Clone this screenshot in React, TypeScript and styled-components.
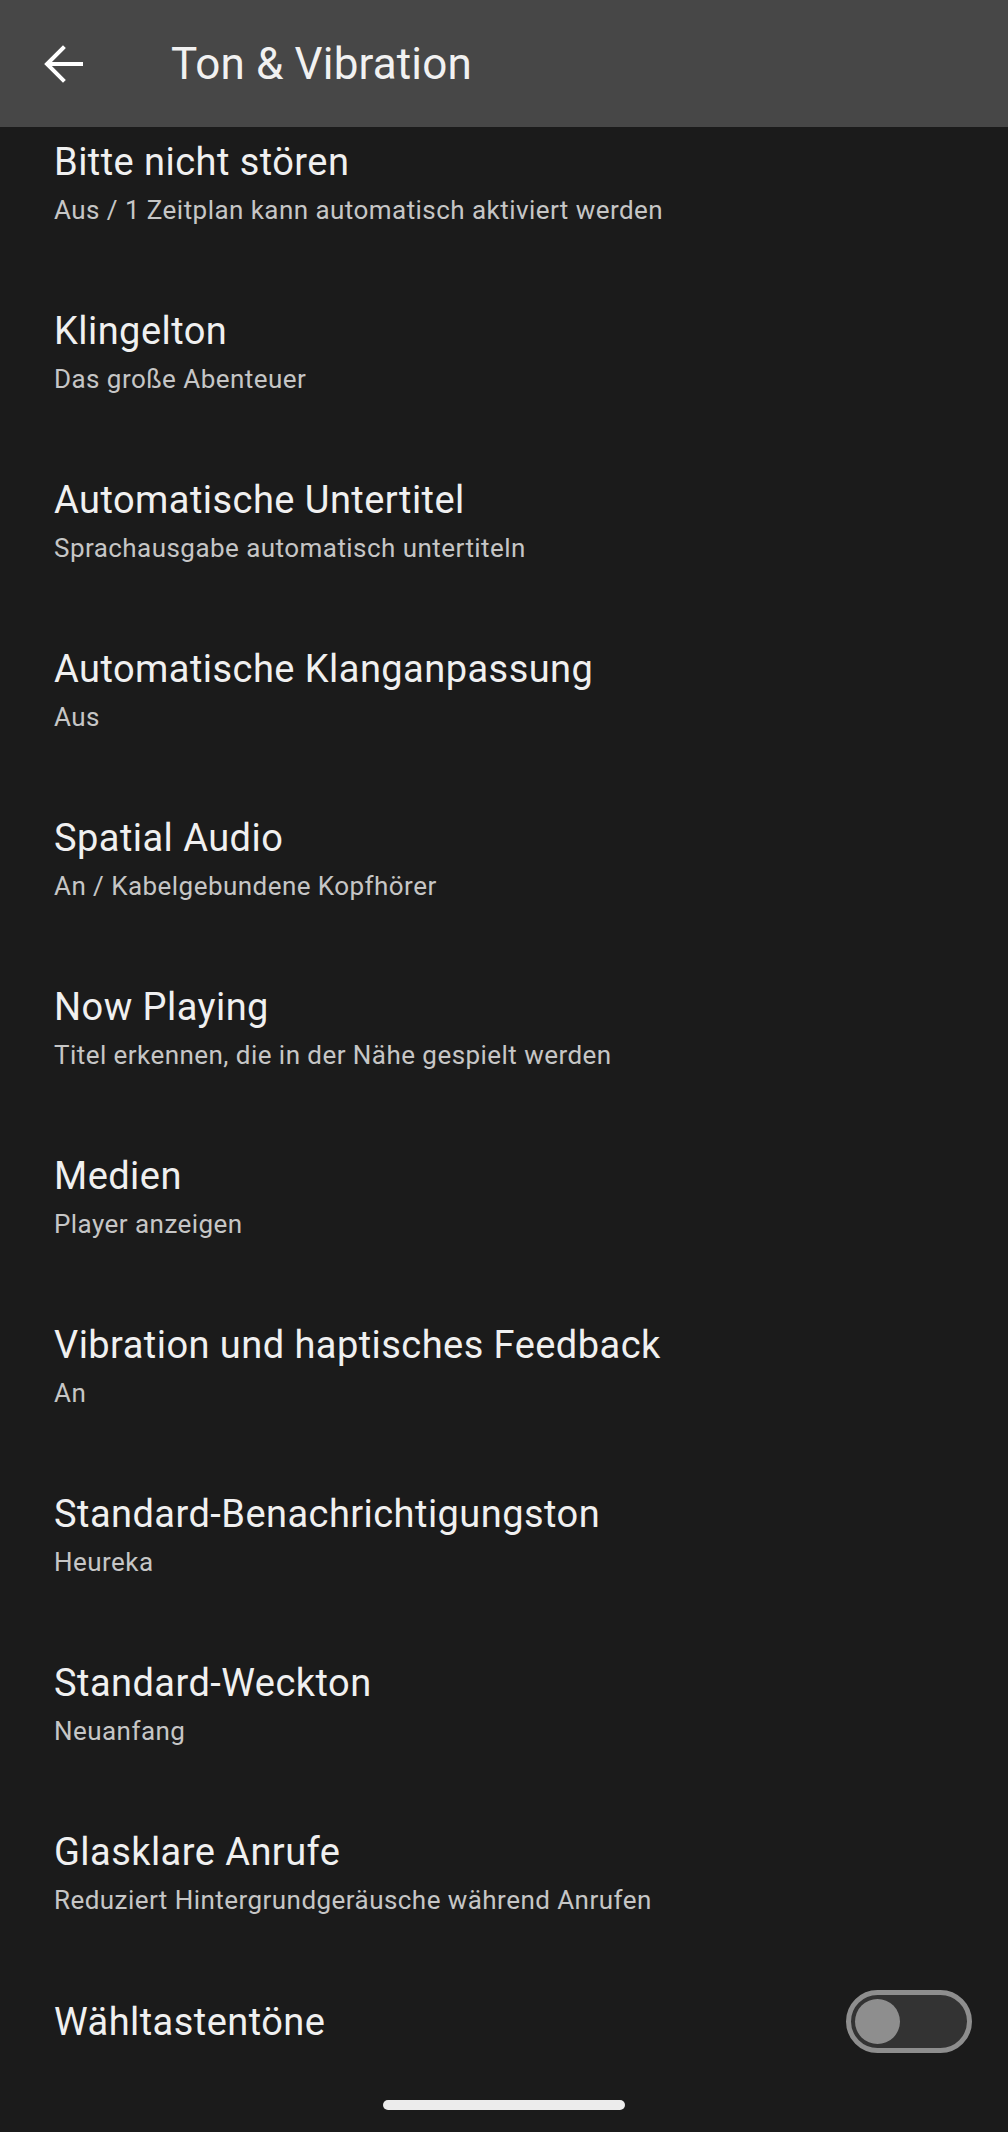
import styled, { createGlobalStyle } from "styled-components";

const GlobalStyle = createGlobalStyle`
  html, body {
    margin: 0;
    padding: 0;
    background: #1b1b1b;
  }
  * {
    box-sizing: border-box;
  }
`;

const Screen = styled.div`
  height: 100vh;
  display: flex;
  flex-direction: column;
  background: #1b1b1b;
  font-family: Roboto, "Noto Sans", sans-serif;
  overflow: hidden;
`;

const Header = styled.header`
  flex: 0 0 127px;
  display: flex;
  align-items: center;
  background: #474747;
  padding-left: 36px;
`;

const BackButton = styled.button`
  width: 54px;
  height: 54px;
  border: 0;
  padding: 0;
  background: transparent;
  display: flex;
  align-items: center;
  justify-content: center;
  cursor: pointer;
`;

const HeaderTitle = styled.h1`
  margin: 0 0 0 81px;
  font-size: 44px;
  font-weight: 400;
  color: #f1f1f1;
  letter-spacing: 0.15px;
`;

const List = styled.div`
  flex: 1;
  overflow: hidden;
`;

const Row = styled.div<{ $compact?: boolean }>`
  display: flex;
  align-items: center;
  justify-content: space-between;
  padding: ${(p) => (p.$compact ? "32px 36px 32px 54px" : "38px 36px 38px 54px")};
  &:first-child {
    padding-top: 10px;
  }
`;

const TextBlock = styled.div`
  display: flex;
  flex-direction: column;
  gap: 3px;
`;

const Title = styled.div`
  font-size: 38px;
  line-height: 50px;
  letter-spacing: 0.45px;
  color: #f0f0f0;
`;

const Summary = styled.div`
  font-size: 26px;
  line-height: 40px;
  letter-spacing: 0.45px;
  color: #c6c6c6;
`;

const Track = styled.div<{ $on?: boolean }>`
  width: 126px;
  height: 63px;
  border-radius: 32px;
  border: 5px solid #8e8e8e;
  background: #333333;
  display: flex;
  align-items: center;
  justify-content: ${(p) => (p.$on ? "flex-end" : "flex-start")};
  padding: 0 4px;
`;

const Knob = styled.div`
  width: 45px;
  height: 45px;
  border-radius: 50%;
  background: #8e8e8e;
`;

const NavBar = styled.div`
  flex: 0 0 54px;
  display: flex;
  align-items: center;
  justify-content: center;
`;

const Handle = styled.div`
  width: 242px;
  height: 10px;
  border-radius: 5px;
  background: #ececec;
`;

const items = [
  { title: "Bitte nicht stören", summary: "Aus / 1 Zeitplan kann automatisch aktiviert werden" },
  { title: "Klingelton", summary: "Das große Abenteuer" },
  { title: "Automatische Untertitel", summary: "Sprachausgabe automatisch untertiteln" },
  { title: "Automatische Klanganpassung", summary: "Aus" },
  { title: "Spatial Audio", summary: "An / Kabelgebundene Kopfhörer" },
  { title: "Now Playing", summary: "Titel erkennen, die in der Nähe gespielt werden" },
  { title: "Medien", summary: "Player anzeigen" },
  { title: "Vibration und haptisches Feedback", summary: "An" },
  { title: "Standard-Benachrichtigungston", summary: "Heureka" },
  { title: "Standard-Weckton", summary: "Neuanfang" },
  { title: "Glasklare Anrufe", summary: "Reduziert Hintergrundgeräusche während Anrufen" },
];

function BackArrow() {
  return (
    <svg width="40" height="38" viewBox="0 0 40 38" fill="none">
      <path
        d="M38 19H5M20 3L4 19l16 16"
        stroke="#ffffff"
        strokeWidth="4"
        strokeLinecap="square"
      />
    </svg>
  );
}

export default function App() {
  return (
    <Screen>
      <GlobalStyle />
      <Header>
        <BackButton aria-label="Zurück">
          <BackArrow />
        </BackButton>
        <HeaderTitle>Ton &amp; Vibration</HeaderTitle>
      </Header>
      <List>
        {items.map((item) => (
          <Row key={item.title}>
            <TextBlock>
              <Title>{item.title}</Title>
              <Summary>{item.summary}</Summary>
            </TextBlock>
          </Row>
        ))}
        <Row $compact>
          <Title>Wähltastentöne</Title>
          <Track>
            <Knob />
          </Track>
        </Row>
      </List>
      <NavBar>
        <Handle />
      </NavBar>
    </Screen>
  );
}
